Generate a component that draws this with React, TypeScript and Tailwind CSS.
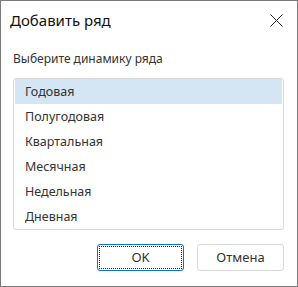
import { useState } from "react";

const periods = ["Годовая", "Полугодовая", "Квартальная", "Месячная", "Недельная", "Дневная"];

export default function App() {
  const [selected, setSelected] = useState(0);

  return (
    <div className="flex h-[287px] w-[298px] flex-col border border-[#7a7a7a] bg-white font-['Noto_Sans',sans-serif] text-[#333]">
      <div className="flex h-[38px] shrink-0 items-center justify-between pl-[9px] pr-[14px]">
        <span className="text-[15px] text-[#111]">Добавить ряд</span>
        <svg width="13" height="13" viewBox="0 0 13 13" className="text-[#222]">
          <path d="M0.5 0.5L12.5 12.5M12.5 0.5L0.5 12.5" stroke="currentColor" strokeWidth="1" />
        </svg>
      </div>

      <div className="flex flex-1 flex-col pl-[12px] pr-[13px]">
        <div className="mt-[12px] text-[12px] leading-[16px]">Выберите динамику ряда</div>

        <div className="mt-[11px] flex flex-col rounded-[3px] border border-[#dadada] px-px">
          {periods.map((p, i) => (
            <div
              key={p}
              onClick={() => setSelected(i)}
              className={`flex h-[25px] items-center pl-[10px] pt-[2px] text-[12.5px] ${i === selected ? "bg-[#d4e6f4]" : ""}`}
            >
              {p}
            </div>
          ))}
        </div>

        <div className="mt-[14px] flex justify-end gap-[13px]">
          <button className="flex h-[27px] w-[87px] items-center justify-center rounded-[3px] border border-[#0a74d2] p-px">
            <span className="flex h-full w-full items-center justify-center border border-dotted border-[#222] text-[13px]">
              OK
            </span>
          </button>
          <button className="flex h-[27px] w-[87px] items-center justify-center rounded-[3px] border border-[#dadada] text-[13px]">
            Отмена
          </button>
        </div>
      </div>
    </div>
  );
}
